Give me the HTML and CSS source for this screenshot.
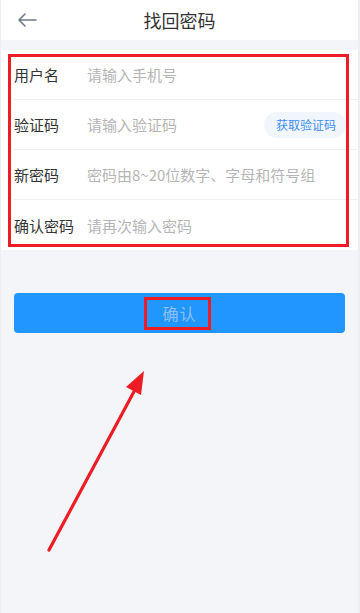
FILE: index.html
```html
<!DOCTYPE html>
<html lang="zh-CN">
<head>
<meta charset="utf-8">
<link rel="stylesheet" href="styles.css">
</head>
<body>
<div class="page">
  <header class="header">
    <svg class="back" width="20" height="14" viewBox="0 0 20 14"><path d="M19 7H2M8 1L2 7l6 6" fill="none" stroke="#6e7a88" stroke-width="1.6" stroke-linecap="round" stroke-linejoin="round"/></svg>
    <h1 class="title">找回密码</h1>
  </header>
  <section class="form">
    <div class="row"><span class="label">用户名</span><span class="ph">请输入手机号</span></div>
    <div class="row"><span class="label">验证码</span><span class="ph">请输入验证码</span><span class="code">获取验证码</span></div>
    <div class="row"><span class="label">新密码</span><span class="ph">密码由8~20位数字、字母和符号组</span></div>
    <div class="row"><span class="label">确认密码</span><span class="ph">请再次输入密码</span></div>
    <div class="mark mark-form"></div>
  </section>
  <div class="btn-wrap">
    <div class="btn"><span class="btn-text">确认</span><div class="mark mark-btn"></div></div>
  </div>
  <svg class="arrow" width="360" height="613" viewBox="0 0 360 613">
    <path d="M48 550L136 386" stroke="#ee1c24" stroke-width="3.2" stroke-linecap="round" fill="none"/>
    <path d="M143 371L125 387L140 395Z" fill="#ee1c24"/>
  </svg>
</div>
</body>
</html>
```
FILE: styles.css
```css
* { box-sizing: border-box; }
html, body { margin: 0; padding: 0; }
body {
  width: 360px;
  height: 613px;
  overflow: hidden;
  background: #f4f5f9;
  font-family: "Noto Sans CJK SC", "Noto Sans", sans-serif;
}
.page {
  position: relative;
  width: 360px;
  height: 613px;
  border-right: 2px solid #eceef2;
  border-left: 1px solid #eceef2;
}
.header {
  position: relative;
  height: 40px;
  background: #fff;
  display: flex;
  align-items: center;
  justify-content: center;
}
.back {
  position: absolute;
  left: 16px;
  top: 13px;
}
.title {
  margin: 0;
  font-size: 18px;
  font-weight: 400;
  color: #333;
  line-height: 1;
}
.form {
  position: relative;
  margin-top: 10px;
  background: #fff;
  padding: 0 0 0 13px;
}
.row {
  height: 50px;
  display: flex;
  align-items: center;
  border-bottom: 1px solid #f0f0f0;
  font-size: 15px;
}
.row:nth-child(4) { border-bottom: none; }
.label {
  width: 73px;
  color: #333;
  flex: none;
}
.ph {
  color: #b5b5b5;
  flex: 1;
  white-space: nowrap;
}
.code {
  flex: none;
  margin-right: 12px;
  height: 26px;
  padding: 0 10px 0 12px;
  border-radius: 13px;
  background: #f1f6fd;
  color: #3f8ef2;
  font-size: 12px;
  display: flex;
  align-items: center;
}
.mark {
  position: absolute;
  border: 3.5px solid #ee1c24;
  pointer-events: none;
}
.mark-form {
  left: 7px;
  top: 4px;
  width: 341px;
  height: 193px;
}
.btn-wrap {
  padding: 43px 13px 0 13px;
}
.btn {
  position: relative;
  height: 40px;
  border-radius: 4px;
  background: #2196fe;
  display: flex;
  align-items: center;
  justify-content: center;
}
.btn-text {
  color: #8fc0f2;
  font-size: 16px;
  letter-spacing: 1px;
}
.mark-btn {
  left: 130px;
  top: 4px;
  width: 67px;
  height: 33px;
}
.arrow {
  position: absolute;
  left: 0;
  top: 0;
  pointer-events: none;
}
```
